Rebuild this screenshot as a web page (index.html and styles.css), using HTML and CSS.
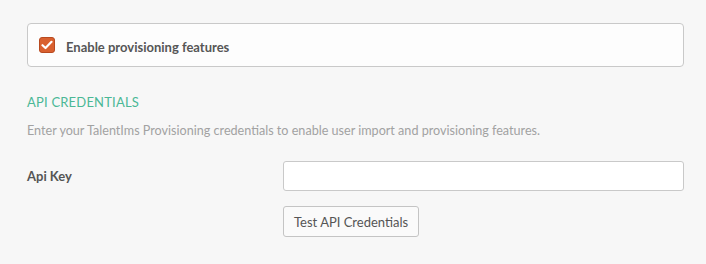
FILE: index.html
```html
<!DOCTYPE html>
<html>
<head>
<meta charset="utf-8">
<link rel="stylesheet" href="styles.css">
</head>
<body>
<div class="page">
  <div class="card">
    <label class="check-row">
      <span class="checkbox">
        <svg width="12" height="10" viewBox="0 0 12 10"><path d="M1.5 5.2 L4.5 8 L10.5 1.8" fill="none" stroke="#fff" stroke-width="2.2" stroke-linecap="round" stroke-linejoin="round"/></svg>
      </span>
      <span class="check-label">Enable provisioning features</span>
    </label>
  </div>
  <h3 class="section-title">API CREDENTIALS</h3>
  <p class="desc">Enter your TalentIms Provisioning credentials to enable user import and provisioning features.</p>
  <div class="form-row">
    <label class="field-label">Api Key</label>
    <div class="field">
      <input class="text-input" type="text">
      <button class="btn">Test API Credentials</button>
    </div>
  </div>
</div>
</body>
</html>
```
FILE: styles.css
```css
html, body {
  margin: 0;
  padding: 0;
  background: #f7f7f7;
}
body {
  font-family: "Lato", "Open Sans", sans-serif;
  color: #555;
}
.page {
  padding: 23px 22px 0 27px;
}
.card {
  background: #fdfdfd;
  border: 1px solid #c9c9c9;
  border-radius: 4px;
  height: 42px;
  display: flex;
  align-items: center;
  padding-left: 11px;
}
.check-row {
  display: flex;
  align-items: center;
  gap: 11px;
}
.checkbox {
  width: 14px;
  height: 14px;
  background: #d9602f;
  border: 1px solid #b84a20;
  border-radius: 3px;
  display: flex;
  align-items: center;
  justify-content: center;
  margin-top: -1px;
}
.check-label {
  font-size: 13px;
  font-weight: 700;
  color: #565656;
  margin-top: 3px;
}
.section-title {
  margin: 26px 0 0 0;
  font-size: 13px;
  font-weight: 400;
  color: #4bb896;
  letter-spacing: 0.2px;
  line-height: 18px;
}
.desc {
  margin: 11px 0 0 0;
  font-size: 12.6px;
  color: #a2a2a2;
  line-height: 18px;
}
.form-row {
  display: flex;
  margin-top: 21px;
}
.field-label {
  width: 256px;
  font-size: 13px;
  font-weight: 700;
  color: #555;
  line-height: 30px;
}
.field {
  flex: 1;
  display: flex;
  flex-direction: column;
  align-items: flex-start;
  gap: 15px;
}
.text-input {
  box-sizing: border-box;
  width: 100%;
  height: 30px;
  border: 1px solid #c9c9c9;
  border-radius: 3px;
  background: #fff;
  margin: 0;
}
.btn {
  box-sizing: border-box;
  height: 31px;
  padding: 0 10px;
  border: 1px solid #c4c4c4;
  border-radius: 3px;
  background: #fafafa;
  font-family: "Lato", "Open Sans", sans-serif;
  font-size: 13px;
  color: #555;
}
```
